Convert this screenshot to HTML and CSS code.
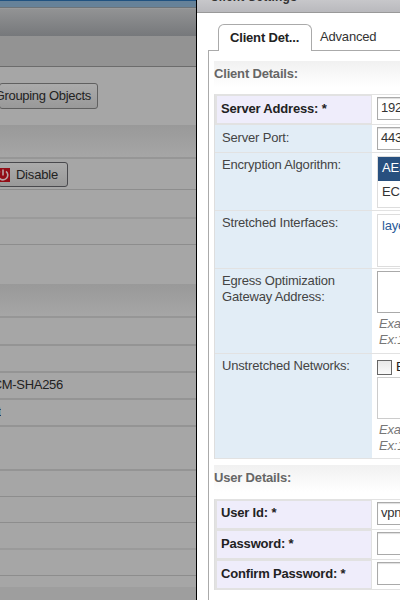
FILE: index.html
```
<!DOCTYPE html>
<html lang="en">
<head>
<meta charset="utf-8">
<title>Client Settings</title>
<link rel="stylesheet" href="styles.css">
</head>
<body>
<main class="screen">
  <section class="backdrop">
    <div class="topbar"></div>
    <div class="toolbar"></div>
    <div class="subbar"></div>
    <div class="actions"><span class="button grouping"><span>Grouping Objects</span></span></div>
    <div class="band"></div>
    <div class="row h31"><span class="button disable"><svg width="14" height="14" viewBox="0 0 14 14"><rect width="14" height="14" fill="#920d16"/><path d="M4 3.3a4.8 4.8 0 1 0 6 0M7 1.5v6" fill="none" stroke="#b9a5a7" stroke-width="1.6"/></svg><span>Disable</span></span></div>
    <div class="row h29 soft"></div>
    <div class="row h26"></div>
    <div class="gap"></div>
    <div class="band"></div>
    <div class="row h28 thick"></div>
    <div class="row h27 thick"></div>
    <div class="row h27 thick"><span class="cut cipher">GCM-SHA256</span></div>
    <div class="row h27 thick"><span class="cut link">net</span></div>
    <div class="row h44 thick"></div>
    <div class="row h26"></div>
    <div class="row h26"></div>
    <div class="row h27 soft"></div>
    <div class="row h26"></div>
    <div class="last"></div>
    <div class="footer"></div>
  </section>
  <section class="dialog">
    <header class="title"><span>Client Settings</span></header>
    <nav class="tabs"><span class="tab active">Client Det...</span><span class="tab">Advanced</span></nav>
    <div class="panel">
      <h2>Client Details:</h2>
      <div class="form">
        <div class="field r1 required"><label>Server Address: *</label><div class="value"><span class="input">192</span></div></div>
        <div class="field r2"><label>Server Port:</label><div class="value"><span class="input">443</span></div></div>
        <div class="field r3"><label>Encryption Algorithm:</label><div class="value"><div class="list"><span class="selected">AES</span><span>ECD</span></div></div></div>
        <div class="field r4"><label>Stretched Interfaces:</label><div class="value"><div class="box"><span>layer</span></div></div></div>
        <div class="field r5"><label>Egress Optimization<br>Gateway Address:</label><div class="value"><div class="area dark"></div><p>Exam<br>Ex:1</p></div></div>
        <div class="field r6"><label>Unstretched Networks:</label><div class="value"><div class="check"><i></i><span>Ex</span></div><div class="area"></div><p>Exam<br>Ex:1</p></div></div>
      </div>
      <h2 class="user">User Details:</h2>
      <div class="form">
        <div class="field u1 required"><label>User Id: *</label><div class="value"><span class="input">vpn</span></div></div>
        <div class="field u2 required"><label>Password: *</label><div class="value"><span class="input"></span></div></div>
        <div class="field u3 required"><label>Confirm Password: *</label><div class="value"><span class="input"></span></div></div>
      </div>
    </div>
  </section>
</main>
</body>
</html>
```
FILE: styles.css
```
* { box-sizing: border-box; }
body { margin: 0; background: #fff; font: 13px/16px "Liberation Sans", Arial, sans-serif; letter-spacing: -0.18px; color: #333; }
.screen { display: grid; grid-template-columns: 197px 203px; width: 400px; height: 600px; overflow: hidden; }
.backdrop { height: 600px; overflow: hidden; background: #a6a6a6; border-right: 1px solid #000; color: #222; }
.topbar { height: 8px; background: #668299; border-top: 1px solid #205280; border-bottom: 1px solid #6d7479; }
.toolbar { height: 28px; background: linear-gradient(#929394, #76787b); border-top: 1px solid #9a9a9a; }
.subbar { height: 31px; background: #939393; border-bottom: 1px solid #6c6c6c; }
.actions { height: 58px; padding-top: 16px; }
.button { display: flex; align-items: center; justify-content: flex-end; height: 26px; border: 1px solid #606060; border-radius: 3px; background: linear-gradient(#ababab, #999); white-space: nowrap; }
.grouping { width: 99px; margin-left: -1px; padding: 0 6px 1px 0; overflow: hidden; letter-spacing: -0.3px; }
.disable { width: 70px; height: 25px; margin: 3px 0 0 -2px; padding: 0 9px 0 0; gap: 6px; border-color: #49494d; }
.disable svg { flex: none; }
.band { height: 34px; background: linear-gradient(#999, #a6a6a6); border-bottom: 2px solid #969696; }
.row { display: flow-root; border-bottom: 1px solid #8d8d8d; }
.row.soft { border-bottom: 2px solid #9a9a9a; }
.row.thick { border-bottom: 2px solid #949494; }
.h26 { height: 26px; }
.h27 { height: 27px; }
.h28 { height: 28px; }
.h29 { height: 29px; }
.h31 { height: 31px; }
.h44 { height: 44px; }
.gap { height: 39px; }
.cut { display: flex; justify-content: flex-end; overflow: hidden; white-space: nowrap; padding-top: 4px; letter-spacing: -0.3px; }
.cipher { width: 63px; }
.link { width: 1px; color: #16375d; }
.last { height: 11px; }
.footer { height: 14px; background: #9e9e9e; }
.dialog { height: 600px; overflow: hidden; background: #fff; }
.title { height: 13px; background: linear-gradient(#c7c7ca, #b9b9bd); border-bottom: 1px solid #999; overflow: hidden; }
.title span { display: block; margin: -11px 0 0 13px; font-weight: bold; font-size: 12px; letter-spacing: 0.2px; white-space: nowrap; }
.tabs { display: flex; height: 38px; padding: 11px 0 0 11px; }
.tabs::after { content: ""; flex: 1; border-bottom: 1px solid #aaa; }
.tabs::before { content: ""; width: 10px; flex: none; border-bottom: 1px solid #aaa; }
.tab { height: 27px; flex: none; padding: 5px 0 0 8px; border-bottom: 1px solid #aaa; white-space: nowrap; }
.tab.active { width: 94px; padding: 5px 0 0 11px; border: 1px solid #aaa; border-bottom: 0; border-radius: 6px 6px 0 0; font-weight: bold; color: #222; }
.panel { height: 549px; margin-left: 11px; padding: 10px 0 0 5px; border-left: 1px solid #aaa; }
h2 { height: 33px; margin: 0; padding: 5px 0 0; background: linear-gradient(#f1f1f1, #fff 80%); font-size: 13px; line-height: 16px; color: #666; }
.form { border-top: 1px solid #e2e2e2; border-left: 1px solid #dedede; }
.field { display: grid; grid-template-columns: 157px 1fr; border-bottom: 1px solid #e2e2e2; }
.field label { display: block; padding: 4px 0 0 7px; background: #e2edf6; color: #444; white-space: nowrap; }
.field.r2 label { padding-top: 5px; }
.field.required label { padding: 4px 0 0 4px; border: 2px solid #e2e2e2; border-width: 1px 1px 1px 2px; background: #efedfb; font-weight: bold; color: #222; }
.field.r1 label, .field.u2 label, .field.u3 label { padding-top: 5px; }
.value { padding: 2px 0 0 5px; overflow: hidden; }
.input { display: block; width: 60px; height: 23px; padding: 2px 3px; border: 1px solid #aaa; box-shadow: inset 0 1px 1px #ddd; }
.r1 { height: 30px; }
.r2 { height: 28px; }
.r3 { height: 58px; }
.r4 { height: 58px; }
.r5 { height: 85px; }
.r6 { height: 105px; }
.list { width: 60px; height: 52px; margin-top: 1px; border: 1px solid #ddd; }
.list span { display: block; height: 24px; padding: 3px 4px; }
.list .selected { background: #28507f; color: #fff; }
.box { width: 60px; height: 53px; margin-top: 1px; padding: 3px 4px; border: 1px solid #ddd; color: #2a5b99; }
.area { width: 60px; height: 42px; border: 1px solid #ccc; }
.area.dark { border-color: #aaa; }
.value p { margin: 3px 0 0 2px; font-style: italic; color: #777; }
.check { display: flex; gap: 4px; height: 18px; margin-top: 3px; color: #222; }
.check i { flex: none; width: 15px; height: 15px; margin-top: 1px; border: 1px solid #666; background: linear-gradient(#e8e8e8, #fafafa); }
.user { height: 34px; margin-top: 6px; }
.u1, .u2, .u3 { height: 30px; }
```
